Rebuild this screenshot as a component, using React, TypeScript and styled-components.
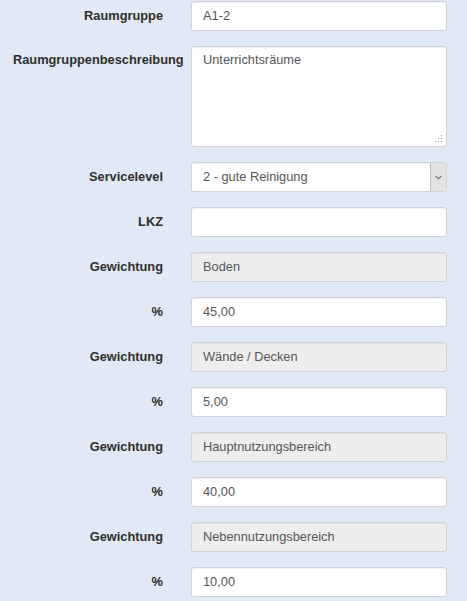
import React, { FC } from 'react';
import styled, { createGlobalStyle } from 'styled-components';

/* ---------- STYLES ---------- */

const GlobalStyle = createGlobalStyle`
    html, body {
        margin: 0;
        padding: 0;
        background: #e0e9f5;
    }
    body {
        font-family: 'Liberation Sans', Arial, sans-serif;
        color: #333333;
    }
`;

const SPage = styled.div`
    width: 467px;
    height: 601px;
    overflow: hidden;
    background: #e0e9f5;
    box-sizing: border-box;
    padding: 1px 20px 0 13px;
`;

const SRow = styled.div<{ $top?: boolean }>`
    display: flex;
    align-items: ${(p) => (p.$top ? 'flex-start' : 'center')};
    gap: 28px;
    margin-bottom: 15px;
`;

const SLabel = styled.label<{ $top?: boolean }>`
    flex: 0 0 150px;
    width: 150px;
    text-align: right;
    font-size: 12.8px;
    font-weight: bold;
    line-height: 18px;
    color: #2e2e2e;
    white-space: nowrap;
    padding-top: ${(p) => (p.$top ? '5px' : '0')};
`;

const SField = styled.div<{ $disabled?: boolean }>`
    position: relative;
    flex: 0 0 256px;
    width: 256px;
    height: 30px;
    box-sizing: border-box;
    display: flex;
    align-items: center;
    border: 1px solid #cfd3d8;
    border-radius: 3px;
    background: ${(p) => (p.$disabled ? '#eeeeee' : '#ffffff')};
    box-shadow: inset 0 1px 1px rgba(0, 0, 0, 0.06);
    font-size: 12.8px;
    line-height: 18px;
    color: #555555;
    overflow: hidden;
`;

const SValue = styled.span`
    flex: 1;
    padding: 0 11px;
    white-space: nowrap;
`;

const STextArea = styled(SField)`
    height: 101px;
    align-items: flex-start;
    padding-top: 4px;
`;

const SArrowBox = styled.span`
    flex: 0 0 15px;
    align-self: stretch;
    display: flex;
    align-items: center;
    justify-content: center;
    background: #e2e2e2;
    border-left: 1px solid #bdbdbd;
`;

const SGrip = styled.svg`
    position: absolute;
    right: 3px;
    bottom: 3px;
`;

/* ---------- COMPONENT ---------- */

interface FieldRow {
    label: string;
    value: string;
    disabled?: boolean;
}

const rows: FieldRow[] = [
    { label: 'LKZ', value: '' },
    { label: 'Gewichtung', value: 'Boden', disabled: true },
    { label: '%', value: '45,00' },
    { label: 'Gewichtung', value: 'Wände / Decken', disabled: true },
    { label: '%', value: '5,00' },
    { label: 'Gewichtung', value: 'Hauptnutzungsbereich', disabled: true },
    { label: '%', value: '40,00' },
    { label: 'Gewichtung', value: 'Nebennutzungsbereich', disabled: true },
    { label: '%', value: '10,00' },
];

const App: FC = () => (
    <>
        <GlobalStyle />
        <SPage>
            <SRow>
                <SLabel>Raumgruppe</SLabel>
                <SField>
                    <SValue>A1-2</SValue>
                </SField>
            </SRow>
            <SRow $top>
                <SLabel $top>Raumgruppenbeschreibung</SLabel>
                <STextArea>
                    <SValue>Unterrichtsräume</SValue>
                    <SGrip width="8" height="8" viewBox="0 0 8 8">
                        <rect x="6" y="0" width="1" height="1" fill="#9a9a9a" />
                        <rect x="3" y="3" width="1" height="1" fill="#9a9a9a" />
                        <rect x="6" y="3" width="1" height="1" fill="#9a9a9a" />
                        <rect x="0" y="6" width="1" height="1" fill="#9a9a9a" />
                        <rect x="3" y="6" width="1" height="1" fill="#9a9a9a" />
                        <rect x="6" y="6" width="1" height="1" fill="#9a9a9a" />
                    </SGrip>
                </STextArea>
            </SRow>
            <SRow>
                <SLabel>Servicelevel</SLabel>
                <SField>
                    <SValue>2 - gute Reinigung</SValue>
                    <SArrowBox>
                        <svg width="7" height="5" viewBox="0 0 7 5">
                            <path d="M0.5 0.8 L3.5 3.8 L6.5 0.8" fill="none" stroke="#666" strokeWidth="1.1" />
                        </svg>
                    </SArrowBox>
                </SField>
            </SRow>
            {rows.map((row, index) => (
                <SRow key={index}>
                    <SLabel>{row.label}</SLabel>
                    <SField $disabled={row.disabled}>
                        <SValue>{row.value}</SValue>
                    </SField>
                </SRow>
            ))}
        </SPage>
    </>
);

export default App;
